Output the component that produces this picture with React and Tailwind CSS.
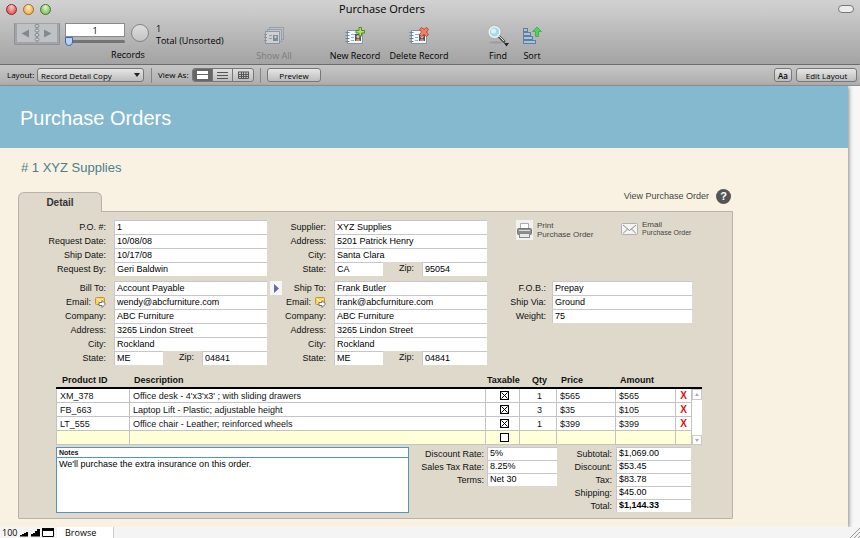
import { useState } from 'react'

const lines = [
  { id: 'XM_378', description: "Office desk - 4'x3'x3' ; with sliding drawers", taxable: true, qty: 1, price: '$565', amount: '$565' },
  { id: 'FB_663', description: 'Laptop Lift - Plastic; adjustable height', taxable: true, qty: 3, price: '$35', amount: '$105' },
  { id: 'LT_555', description: 'Office chair - Leather; reinforced wheels', taxable: true, qty: 1, price: '$399', amount: '$399' },
]

const order = [
  { label: 'P.O. #:', value: '1' },
  { label: 'Request Date:', value: '10/08/08' },
  { label: 'Ship Date:', value: '10/17/08' },
  { label: 'Request By:', value: 'Geri Baldwin' },
]

const supplier = [
  { label: 'Supplier:', value: 'XYZ Supplies' },
  { label: 'Address:', value: '5201 Patrick Henry' },
  { label: 'City:', value: 'Santa Clara' },
  { label: 'State:', value: 'CA', zip: '95054' },
]

const billTo = [
  { label: 'Bill To:', value: 'Account Payable' },
  { label: 'Email:', value: 'wendy@abcfurniture.com', mail: true },
  { label: 'Company:', value: 'ABC Furniture' },
  { label: 'Address:', value: '3265 Lindon Street' },
  { label: 'City:', value: 'Rockland' },
  { label: 'State:', value: 'ME', zip: '04841' },
]

const shipTo = [
  { label: 'Ship To:', value: 'Frank Butler' },
  { label: 'Email:', value: 'frank@abcfurniture.com', mail: true },
  { label: 'Company:', value: 'ABC Furniture' },
  { label: 'Address:', value: '3265 Lindon Street' },
  { label: 'City:', value: 'Rockland' },
  { label: 'State:', value: 'ME', zip: '04841' },
]

const shipping = [
  { label: 'F.O.B.:', value: 'Prepay' },
  { label: 'Ship Via:', value: 'Ground' },
  { label: 'Weight:', value: '75' },
]

const rates = [
  { label: 'Discount Rate:', value: '5%' },
  { label: 'Sales Tax Rate:', value: '8.25%' },
  { label: 'Terms:', value: 'Net 30' },
]

const totals = [
  { label: 'Subtotal:', value: '$1,069.00' },
  { label: 'Discount:', value: '$53.45' },
  { label: 'Tax:', value: '$83.78' },
  { label: 'Shipping:', value: '$45.00' },
  { label: 'Total:', value: '$1,144.33', bold: true },
]

const fieldClass = 'min-w-0 border-t border-l border-[#c6c6cc] bg-white pl-[2px] text-black outline-none'
const buttonClass = 'h-[14px] rounded-[3px] border border-[#777] bg-linear-to-b from-[#e6e6e6] to-[#bdbdbd] text-black'

/* ---------- icons ---------- */

function MailNoteIcon() {
  return (
    <svg width="11" height="11" viewBox="0 0 11 11">
      <rect x="0.5" y="0.5" width="9" height="7" rx="1" fill="#fbd45c" stroke="#c8922a" />
      <path d="M2 2l3 2.500 3-2.500" fill="none" stroke="#fff" />
      <path d="M4 5.500h3v-2L10.500 7 7 10.500v-2H4z" fill="#fff" stroke="#555" strokeWidth="0.800" />
    </svg>
  )
}

function BookIcon() {
  return (
    <svg width="46" height="23" viewBox="0 0 46 23">
      <path d="M0.500 0v21.500h45V0" fill="#a2a6aa" stroke="#8d9195" />
      <rect x="2.500" y="0.500" width="20" height="19" fill="#bfc2c5" stroke="#a0a4a8" />
      <rect x="23.500" y="0.500" width="20" height="19" fill="#bfc2c5" stroke="#a0a4a8" />
      <path d="M15 6.500v8L7.500 10.500z" fill="#84898e" />
      <path d="M30 6.500v8l7.500-4z" fill="#84898e" />
      {[3, 7.5, 12, 16.5].map((y) => (
        <ellipse key={y} cx="23" cy={y} rx="2" ry="1.500" fill="#d0d2d4" stroke="#84898e" />
      ))}
    </svg>
  )
}

function RecordCard() {
  return (
    <>
      <rect x="2.500" y="4.500" width="15" height="13" fill="#f4f7fa" stroke="#8496a8" />
      <path d="M0.500 6.500h4M0.500 9.500h4M0.500 12.500h4M0.500 15.500h4" stroke="#6d8195" />
      <path d="M6 8.500h4M6 11.500h3M6 14.500h3" stroke="#9dacbb" />
      <rect x="10" y="8" width="6" height="7" fill="#3e5a75" />
      <circle cx="13" cy="10.500" r="1.500" fill="#f0c49c" />
      <path d="M11 15c0-3.500 4-3.500 4 0z" fill="#e08a52" />
    </>
  )
}

function ShowAllIcon() {
  return (
    <svg width="20" height="20" viewBox="0 0 20 20" opacity="0.5">
      <rect x="5.500" y="1.500" width="14" height="12" fill="#b9c3cd" stroke="#758595" />
      <rect x="3.500" y="3.500" width="14" height="12" fill="#c9d0d8" stroke="#758595" />
      <rect x="1.500" y="5.500" width="14" height="12" fill="#e4e8ec" stroke="#687a8c" />
      <path d="M0 8.500h3M0 11.500h3M0 14.500h3" stroke="#5d6f81" />
      <path d="M5 9.500h3M5 12.500h3" stroke="#75879a" />
      <rect x="9" y="9" width="5" height="6" fill="#4a6076" />
      <circle cx="11.500" cy="11" r="1.200" fill="#ddd" />
    </svg>
  )
}

function NewRecordIcon() {
  return (
    <svg width="20" height="20" viewBox="0 0 20 20">
      <RecordCard />
      <path d="M14 1.500h2.500v3h3V7h-3v3H14V7h-3V4.500h3z" fill="#b4e06a" stroke="#4c8a1c" />
    </svg>
  )
}

function DeleteRecordIcon() {
  return (
    <svg width="20" height="20" viewBox="0 0 20 20">
      <RecordCard />
      <path d="M12.500 1.500l2.500 2 2.500-2 2 2-2 2.500 2 2.500-2 2-2.500-2-2.500 2-2-2 2-2.500-2-2.500z" fill="#f0806c" stroke="#c04432" />
    </svg>
  )
}

function FindIcon() {
  return (
    <svg width="22" height="22" viewBox="0 0 22 22">
      <ellipse cx="9" cy="17.500" rx="7" ry="1.500" fill="#8d8d8d" opacity="0.5" />
      <path d="M12 11.500l5 5" stroke="#555" strokeWidth="3" strokeLinecap="round" />
      <path d="M12 11l5 5" stroke="#ddd" strokeWidth="1" />
      <circle cx="7.500" cy="7" r="5.500" fill="#9fdcec" stroke="#f2f4f5" strokeWidth="1.500" />
      <circle cx="7.500" cy="7" r="6.500" fill="none" stroke="#9aa4aa" strokeWidth="0.500" />
      <circle cx="6.500" cy="6" r="2.500" fill="#d8f4fb" />
      <path d="M17 18h5l-2.500 3.500z" fill="#222" />
    </svg>
  )
}

function SortIcon() {
  return (
    <svg width="20" height="20" viewBox="0 0 20 20">
      <g fill="#a9c3df" stroke="#5f7f9f">
        <rect x="1.500" y="2.500" width="4" height="3" />
        <rect x="1.500" y="6.500" width="7" height="3" />
        <rect x="1.500" y="10.500" width="9" height="3" />
        <rect x="1.500" y="14.500" width="12" height="3" />
      </g>
      <path d="M15 1l4.500 4.500h-3v5h-3v-5h-3z" fill="#4fd455" stroke="#3aa844" strokeWidth="0.800" />
    </svg>
  )
}

function PrinterIcon() {
  return (
    <svg width="17" height="20" viewBox="0 0 17 20">
      <rect width="17" height="20" fill="#f1f1ef" />
      <path d="M4.500 9V3.500h8V9" fill="#fff" stroke="#aaa" />
      <rect x="1.500" y="8.500" width="14" height="6" rx="1" fill="#8d8d8d" stroke="#777" />
      <path d="M3 10.500h11" stroke="#ddd" />
      <rect x="3.500" y="13.500" width="10" height="4" fill="#e9e9e9" stroke="#888" />
    </svg>
  )
}

function EnvelopeIcon() {
  return (
    <svg width="17" height="14" viewBox="0 0 17 14">
      <rect x="0.500" y="1.500" width="16" height="11" rx="1" fill="#f4f4f4" stroke="#b0b0b0" />
      <path d="M2 3l6.500 5.500L15 3M2 11.500l4.500-4.500M15 11.500L10.500 7" fill="none" stroke="#8a8a8a" />
    </svg>
  )
}

/* ---------- toolbar ---------- */

function ToolButton({ icon, label, disabled, className }) {
  return (
    <button disabled={disabled} className={`flex h-[45px] flex-col items-center justify-between pt-[6px] ${disabled ? 'text-[#7c7c7c]' : 'text-black'} ${className}`}>
      <span className="flex h-[24px] items-center">{icon}</span>
      <span className="leading-[14px] whitespace-nowrap">{label}</span>
    </button>
  )
}

function TopBar() {
  return (
    <header className="border-b border-[#6c6c6c] bg-linear-to-b from-[#d2d2d2] to-[#a3a3a3] text-[9px] font-medium">
      <div className="flex h-[18px] items-center px-[6px]">
        <div className="flex w-[60px] gap-[6px]">
          <button aria-label="Close" className="size-[11px] rounded-full border border-[#8c2a2a] bg-radial-[at_50%_20%] from-[#ffd0cc] to-[#dc3238]" />
          <button aria-label="Minimize" className="size-[11px] rounded-full border border-[#a8681c] bg-radial-[at_50%_20%] from-[#fff0c0] to-[#f09a32]" />
          <button aria-label="Zoom" className="size-[11px] rounded-full border border-[#3f7a28] bg-radial-[at_50%_20%] from-[#e4f8cc] to-[#62b33e]" />
        </div>
        <h1 className="flex-1 pr-[140px] text-center text-[11px] font-normal">Purchase Orders</h1>
        <button aria-label="Toggle toolbar" className="h-[8px] w-[16px] rounded-full border border-[#777] bg-[#ececec]" />
      </div>

      <div className="flex h-[46px] items-start pl-[14px] leading-[12px]">
        <div>
          <div className="flex h-[30px] items-start pt-[5px]">
            <button aria-label="Previous or next record"><BookIcon /></button>
            <div className="ml-[5px] flex w-[60px] flex-col">
              <input aria-label="Current record" defaultValue="1" className="h-[14px] w-full border border-[#8a8a8a] bg-white text-center outline-none" />
              <input
                aria-label="Record position"
                type="range"
                defaultValue="0"
                className="h-[9px] w-full appearance-none bg-transparent [&::-webkit-slider-runnable-track]:h-[3px] [&::-webkit-slider-runnable-track]:rounded-full [&::-webkit-slider-runnable-track]:bg-[#747474] [&::-webkit-slider-thumb]:-mt-[3px] [&::-webkit-slider-thumb]:h-[9px] [&::-webkit-slider-thumb]:w-[8px] [&::-webkit-slider-thumb]:appearance-none [&::-webkit-slider-thumb]:rounded-t-[2px] [&::-webkit-slider-thumb]:rounded-b-full [&::-webkit-slider-thumb]:border [&::-webkit-slider-thumb]:border-[#3c69a8] [&::-webkit-slider-thumb]:bg-[#b5d5f6]"
              />
            </div>
            <div className="mt-px ml-[6px] size-[18px] rounded-full border border-[#838383] bg-linear-to-b from-[#dedede] to-[#c4c4c4]" />
            <p className="ml-[7px] w-[72px] whitespace-nowrap">1<br />Total (Unsorted)</p>
          </div>
          <p className="pl-[14px] text-center leading-[14px]">Records</p>
        </div>
        <ToolButton icon={<ShowAllIcon />} label="Show All" disabled className="ml-[21px] w-[50px]" />
        <ToolButton icon={<NewRecordIcon />} label="New Record" className="ml-[26px] w-[60px]" />
        <ToolButton icon={<DeleteRecordIcon />} label="Delete Record" className="w-[68px]" />
        <ToolButton icon={<FindIcon />} label="Find" className="ml-[28px] w-[34px]" />
        <ToolButton icon={<SortIcon />} label="Sort" className="w-[34px]" />
      </div>
    </header>
  )
}

function LayoutBar() {
  const [view, setView] = useState('form')
  const segment = (name) =>
    `flex w-[20px] items-center justify-center ${view === name ? 'bg-[#666] text-white' : 'text-[#555]'}`

  return (
    <nav className="flex h-[21px] items-center border-b border-[#8a8f94] bg-linear-to-b from-[#c6c6c6] to-[#adadad] pr-[3px] pl-[7px] text-[8px] text-black">
      <label htmlFor="layout" className="w-[30px]">Layout:</label>
      <div className="relative flex">
        <select id="layout" className={`${buttonClass} w-[107px] appearance-none pl-[3px] leading-[11px]`}>
          <option>Record Detail Copy</option>
        </select>
        <svg className="pointer-events-none absolute top-[5px] right-[4px]" width="6" height="4"><path d="M0 0h6L3 4z" fill="#222" /></svg>
      </div>
      <div className="ml-[7px] h-[15px] w-px bg-[#858585]" />
      <span className="ml-[6px] w-[34px] whitespace-nowrap">View As:</span>
      <div className="flex h-[14px] divide-x divide-[#777] overflow-hidden rounded-[3px] border border-[#777] bg-linear-to-b from-[#e0e0e0] to-[#bdbdbd]">
        <button aria-label="Form view" onClick={() => setView('form')} className={segment('form')}>
          <svg width="11" height="8" fill="currentColor"><path d="M0 0h11v3H0zM0 4h11v4H0z" /></svg>
        </button>
        <button aria-label="List view" onClick={() => setView('list')} className={segment('list')}>
          <svg width="11" height="8" stroke="currentColor"><path d="M0 1.500h11M0 4.500h11M0 7.500h11" /></svg>
        </button>
        <button aria-label="Table view" onClick={() => setView('table')} className={segment('table')}>
          <svg width="11" height="8" stroke="currentColor" fill="none"><path d="M0 1h11M0.500 1v6.500h10V1M0 3.500h11M0 5.500h11M3.500 1v6M5.500 1v6M8 1v6" /></svg>
        </button>
      </div>
      <div className="ml-[6px] h-[15px] w-px bg-[#858585]" />
      <button className={`${buttonClass} ml-[6px] w-[54px] leading-[11px]`}>Preview</button>
      <button className={`${buttonClass} ml-auto w-[18px] leading-[11px] font-semibold`}>Aa</button>
      <button className={`${buttonClass} ml-[4px] w-[61px] leading-[11px]`}>Edit Layout</button>
    </nav>
  )
}

/* ---------- form ---------- */

function Fields({ id, rows, labelClass, rowClass = 'h-[14px]' }) {
  return (
    <div>
      {rows.map((row, i) => (
        <div key={row.label} className={`flex ${rowClass}`}>
          <label htmlFor={`${id}-${i}`} className={`flex shrink-0 items-center justify-end gap-1 leading-[12px] whitespace-nowrap ${labelClass}`}>
            {row.label}
            {row.mail && <MailNoteIcon />}
          </label>
          <input id={`${id}-${i}`} defaultValue={row.value} className={`${fieldClass} ${row.zip ? 'w-[49px]' : 'w-0 flex-1'} ${row.bold ? 'font-bold' : ''}`} />
          {row.zip && (
            <>
              <label htmlFor={`${id}-zip`} className="flex-1 pr-[8px] text-right leading-[13px]">Zip:</label>
              <input id={`${id}-zip`} defaultValue={row.zip} className={`${fieldClass} w-[65px]`} />
            </>
          )}
        </div>
      ))}
    </div>
  )
}

function TaxBox({ checked, label }) {
  return (
    <label className="relative mx-auto block size-[9px]">
      <input type="checkbox" aria-label={label} defaultChecked={checked} className="peer block size-[9px] appearance-none border border-black bg-white" />
      <svg className="pointer-events-none absolute top-0 left-0 hidden peer-checked:block" width="9" height="9">
        <path d="M1.500 1.500l6 6M7.500 1.500l-6 6" stroke="#000" />
      </svg>
    </label>
  )
}

function LineItems() {
  const cell = 'h-[14px] border-r border-b border-[#c3c3c3] p-0 pl-[3px]'
  const head = 'h-[16px] p-0 border-b-2 border-black text-left'

  return (
    <div className="flex pr-[30px] pl-[37px]">
      <table className="w-0 flex-1 table-fixed border-separate border-spacing-0 leading-[12px]">
        <colgroup>
          <col className="w-[74px]" />
          <col />
          <col className="w-[34px]" />
          <col className="w-[37px]" />
          <col className="w-[59px]" />
          <col className="w-[60px]" />
          <col className="w-[16px]" />
        </colgroup>
        <thead>
          <tr>
            <th className={`${head} pl-[6px]`}>Product ID</th>
            <th className={`${head} pl-[4px]`}>Description</th>
            <th className={`${head} pl-px`}>Taxable</th>
            <th className={`${head} pl-[12px]`}>Qty</th>
            <th className={`${head} pl-[4px]`}>Price</th>
            <th className={`${head} pl-[4px]`}>Amount</th>
            <th className={head} aria-label="Delete" />
          </tr>
        </thead>
        <tbody>
          {lines.map((line) => (
            <tr key={line.id} className="bg-white">
              <td className={`${cell} border-l`}>{line.id}</td>
              <td className={cell}>{line.description}</td>
              <td className={cell}><TaxBox checked={line.taxable} label={`${line.id} taxable`} /></td>
              <td className={`${cell} text-center`}>{line.qty}</td>
              <td className={cell}>{line.price}</td>
              <td className={cell}>{line.amount}</td>
              <td className={cell}>
                <button aria-label={`Delete ${line.id}`} className="block w-full pr-[3px] text-center text-[10px] font-bold text-[#e01010]">X</button>
              </td>
            </tr>
          ))}
          <tr className="bg-[#ffffd8]">
            <td className={`${cell} border-l`} />
            <td className={cell} />
            <td className={cell}><TaxBox label="New line taxable" /></td>
            <td className={cell} />
            <td className={cell} />
            <td className={cell} />
            <td className={cell} />
          </tr>
        </tbody>
      </table>
      <div className="mt-[14px] flex w-[10px] flex-col justify-between border-t-2 border-black bg-white">
        <button aria-label="Scroll up" className="flex h-[11px] items-center justify-center border border-[#c9c9c9]">
          <svg width="4" height="3"><path d="M0 3h4L2 0z" fill="#aaa" /></svg>
        </button>
        <button aria-label="Scroll down" className="flex h-[10px] items-center justify-center border border-[#c9c9c9]">
          <svg width="4" height="3"><path d="M0 0h4L2 3z" fill="#aaa" /></svg>
        </button>
      </div>
    </div>
  )
}

function DetailPanel() {
  return (
    <section className="rounded-b-[1px] border border-[#b9b1aa] bg-[#dfd9cc] pt-[8px] pb-[5px] text-[9px] text-[#111]">
      <div className="grid grid-cols-[minmax(0,248fr)_minmax(0,220fr)_minmax(0,205fr)] gap-y-[5px] pr-[40px]">
        <Fields id="order" rows={order} labelClass="w-[95px] pr-[8px]" />
        <Fields id="supplier" rows={supplier} labelClass="w-[67px] pr-[8px]" />
        <div className="flex items-start pl-[29px] text-[8px] leading-[9px] text-[#444] whitespace-nowrap">
          <button className="flex w-[105px] items-center gap-[4px] text-left">
            <PrinterIcon />
            <span>Print<br />Purchase Order</span>
          </button>
          <button className="flex items-center gap-[4px] pt-px text-left">
            <EnvelopeIcon />
            <span className="leading-[8px]">Email<br /><span className="text-[7px]">Purchase Order</span></span>
          </button>
        </div>

        <Fields id="bill" rows={billTo} labelClass="w-[95px] pr-[8px]" />
        <div className="relative">
          <button aria-label="Copy billing to shipping" className="absolute top-0 left-[3px] flex h-[14px] w-[12px] items-center justify-center bg-[#f6f5f8]">
            <svg width="5" height="9"><path d="M0 0l5 4.500L0 9z" fill="#6b67ad" /></svg>
          </button>
          <Fields id="ship" rows={shipTo} labelClass="w-[67px] pr-[8px]" />
        </div>
        <Fields id="shipping" rows={shipping} labelClass="w-[65px] pr-[6px]" />
      </div>

      <div className="pt-[8px]">
        <LineItems />
      </div>

      <div className="flex items-start pt-[2px] pr-[41px] pl-[37px]">
        <div className="flex h-[66px] flex-1 flex-col border border-[#5594c0] bg-white">
          <label htmlFor="notes" className="border-b border-[#5594c0] pl-[2px] text-[7px] leading-[9px] font-bold">Notes</label>
          <textarea id="notes" defaultValue="We'll purchase the extra insurance on this order." className="flex-1 resize-none px-[2px] leading-[12px] text-black outline-none" />
        </div>
        <div className="w-[148px]">
          <Fields id="rates" rows={rates} labelClass="w-[78px] pr-[3px]" rowClass="h-[13px]" />
        </div>
        <div className="w-[134px]">
          <Fields id="totals" rows={totals} labelClass="w-[59px] pr-[4px]" rowClass="h-[13px]" />
        </div>
      </div>
    </section>
  )
}

function StatusBar() {
  return (
    <footer className="flex h-[11px] items-center bg-[#f4f4f4] text-[9px] leading-[11px] text-black">
      <span className="w-[20px] pl-[2px]">100</span>
      <button aria-label="Zoom out"><svg width="10" height="9"><path d="M0 8.500V7h2V6h2V5h2V4h2v4.500z" /></svg></button>
      <button aria-label="Zoom in"><svg width="11" height="9"><path d="M1 8.500V6h2V5h2V3h2V1h3v7.500z" /></svg></button>
      <button aria-label="Toggle status area" className="ml-px"><svg width="12" height="9"><path d="M0.500 0.500h11v8H0.500z" fill="#fff" stroke="#000" /><path d="M0 0h12v3H0z" /></svg></button>
      <button className="ml-[3px] w-[57px] border-r border-[#ccc] bg-white pl-[8px] text-left">Browse</button>
      <svg className="ml-auto" width="11" height="11" stroke="#999"><path d="M1 11L11 1M5 11l6-6M9 11l2-2" /></svg>
    </footer>
  )
}

export default function App() {
  return (
    <div className="flex min-h-screen flex-col bg-[#f7f7f7] font-['Open_Sans',sans-serif]">
      <TopBar />
      <LayoutBar />

      <main className="mr-[12px] flex-1 bg-[#f9f2e2] pb-[8px] font-['Liberation_Sans',Arial,sans-serif] shadow-[1px_1px_4px_#888]">
        <div className="flex h-[62px] items-center bg-[#84b9cf] pt-px pl-[20px]">
          <h2 className="text-[20px] text-white">Purchase Orders</h2>
        </div>
        <h3 className="pt-[10px] pl-[21px] text-[13px] leading-[20px] text-[#4d7d8c]"># 1 XYZ Supplies</h3>

        <div className="mr-[115px] ml-[18px] pt-[9px]">
          <div className="flex h-[24px] items-end justify-between">
            <button className="relative top-px h-[20px] w-[84px] rounded-t-[6px] border border-b-0 border-[#b9b1aa] bg-[#dfd9cc] text-[10px] font-bold text-[#333]">Detail</button>
            <a href="#help" className="flex items-center gap-[7px] self-start pt-[2px] pr-[2px] text-[9px] text-[#444]">
              View Purchase Order
              <span className="flex size-[15px] items-center justify-center rounded-full bg-[#555] text-[11px] font-bold text-white">?</span>
            </a>
          </div>
          <DetailPanel />
        </div>
      </main>

      <StatusBar />
    </div>
  )
}
